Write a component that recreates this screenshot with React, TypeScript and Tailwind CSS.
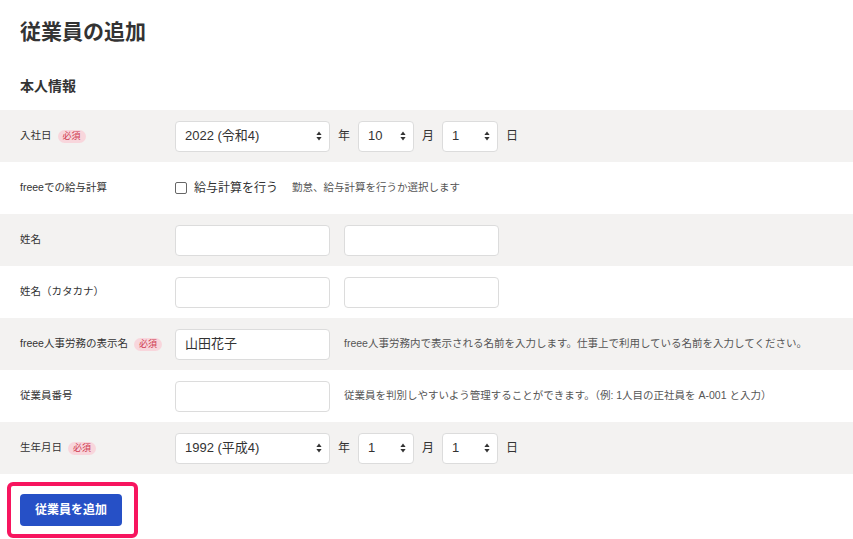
import type { ReactNode } from 'react';

const font = '"Liberation Sans", "Noto Sans CJK JP", "Noto Sans", sans-serif';

function Required(): JSX.Element {
  return (
    <span className="ml-[6px] inline-flex h-[13px] items-center rounded-full bg-[#f8d6dc] px-[5px] text-[9px] leading-none text-[#cf3a50]">
      必須
    </span>
  );
}

function Row({
  label,
  required,
  shaded,
  children,
}: {
  label: string;
  required?: boolean;
  shaded?: boolean;
  children: ReactNode;
}): JSX.Element {
  return (
    <div className={`flex h-[52px] items-center px-5 ${shaded ? 'bg-[#f3f2f1]' : 'bg-white'}`}>
      <div className="flex w-[155px] shrink-0 items-center text-[10.5px] text-[#333]">
        {label}
        {required ? <Required /> : null}
      </div>
      <div className="flex items-center">{children}</div>
    </div>
  );
}

function Arrows(): JSX.Element {
  return (
    <svg
      width="6"
      height="10"
      viewBox="0 0 6 10"
      className="pointer-events-none absolute right-[8px] top-1/2 -translate-y-1/2"
      aria-hidden="true"
    >
      <path d="M3 0.5 L5.6 4 H0.4 Z" fill="#333" />
      <path d="M3 9.5 L5.6 6 H0.4 Z" fill="#333" />
    </svg>
  );
}

function Select({ value, width }: { value: string; width: string }): JSX.Element {
  return (
    <div className={`relative h-[31px] ${width}`}>
      <div className="flex h-full items-center rounded-[4px] border border-[#dcdcdc] bg-white pl-[9px] text-[13px] text-[#333]">
        {value}
      </div>
      <Arrows />
    </div>
  );
}

function DateFields({ year, month, day }: { year: string; month: string; day: string }): JSX.Element {
  return (
    <div className="flex items-center text-[12px] text-[#333]">
      <Select value={year} width="w-[155px]" />
      <span className="mx-[8px]">年</span>
      <Select value={month} width="w-[56px]" />
      <span className="mx-[8px]">月</span>
      <Select value={day} width="w-[56px]" />
      <span className="ml-[8px]">日</span>
    </div>
  );
}

function TextInput({ value }: { value?: string }): JSX.Element {
  return (
    <div className="flex h-[31px] w-[155px] items-center rounded-[4px] border border-[#dcdcdc] bg-white px-[9px] text-[13px] text-[#333]">
      {value}
    </div>
  );
}

function Help({ children }: { children: ReactNode }): JSX.Element {
  return <span className="ml-[14px] text-[10.5px] text-[#555]">{children}</span>;
}

export default function App(): JSX.Element {
  return (
    <div className="h-[539px] w-[853px] overflow-hidden bg-white" style={{ fontFamily: font }}>
      <h1 className="px-5 pt-[18px] text-[21px] font-bold leading-[28px] text-[#333]">従業員の追加</h1>
      <h2 className="mt-[30px] mb-[14px] px-5 text-[14px] font-bold leading-[20px] text-[#333]">本人情報</h2>

      <Row label="入社日" required shaded>
        <DateFields year="2022 (令和4)" month="10" day="1" />
      </Row>

      <Row label="freeeでの給与計算">
        <span className="h-[12px] w-[12px] rounded-[2px] border border-[#666] bg-white" />
        <span className="ml-[7px] text-[12px] text-[#333]">給与計算を行う</span>
        <Help>勤怠、給与計算を行うか選択します</Help>
      </Row>

      <Row label="姓名" shaded>
        <TextInput />
        <div className="ml-[14px]">
          <TextInput />
        </div>
      </Row>

      <Row label="姓名（カタカナ）">
        <TextInput />
        <div className="ml-[14px]">
          <TextInput />
        </div>
      </Row>

      <Row label="freee人事労務の表示名" required shaded>
        <TextInput value="山田花子" />
        <Help>freee人事労務内で表示される名前を入力します。仕事上で利用している名前を入力してください。</Help>
      </Row>

      <Row label="従業員番号">
        <TextInput />
        <Help>従業員を判別しやすいよう管理することができます。（例: 1人目の正社員を A-001 と入力）</Help>
      </Row>

      <Row label="生年月日" required shaded>
        <DateFields year="1992 (平成4)" month="1" day="1" />
      </Row>

      <div className="ml-[7px] mt-2 inline-flex rounded-[6px] border-4 border-[#f7155f] py-2 pl-[9px] pr-3">
        <button
          type="button"
          className="h-[32px] w-[102px] rounded-[4px] bg-[#2650c6] text-[12px] font-bold text-white"
        >
          従業員を追加
        </button>
      </div>
    </div>
  );
}
